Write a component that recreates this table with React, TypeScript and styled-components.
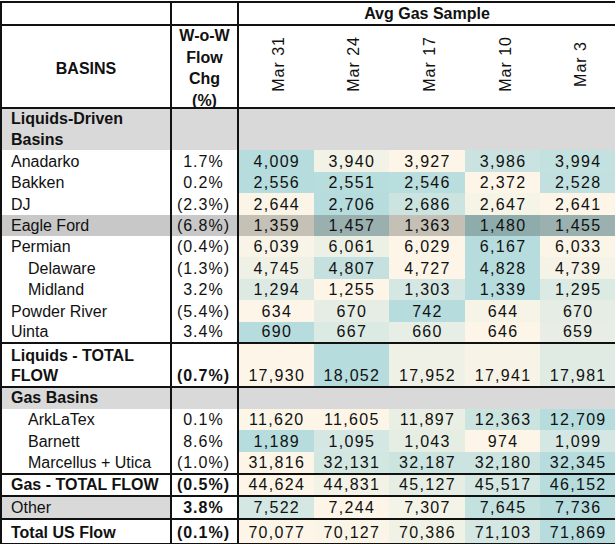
import React from 'react';
import styled, { createGlobalStyle } from 'styled-components';

const Global = createGlobalStyle`
  html, body { margin: 0; padding: 0; background: #ffffff; }
  body { font-family: "Liberation Sans", Arial, sans-serif; color: #111111; }
`;

const LINE = '2px solid #111111';
const CREAM = [253, 246, 232];
const TEAL = [182, 220, 221];

const Table = styled.table`
  border-collapse: collapse;
  table-layout: fixed;
  width: 615px;
  margin-top: 1px;
  font-size: 16px;
  border: ${LINE};
`;

const Col = styled.col<{ $w: number }>`
  width: ${(p) => p.$w}px;
`;

const Row = styled.tr<{ $h: number; $line?: boolean }>`
  height: ${(p) => p.$h}px;
  ${(p) => (p.$line ? `border-bottom: ${LINE};` : '')}
`;

const Cell = styled.td<{
  $bg?: string;
  $bold?: boolean;
  $indent?: boolean;
  $edge?: boolean;
}>`
  padding: 0 0 0 ${(p) => (p.$indent ? 26 : 9)}px;
  line-height: 20px;
  text-align: left;
  vertical-align: bottom;
  background: ${(p) => p.$bg || '#ffffff'};
  font-weight: ${(p) => (p.$bold ? 700 : 400)};
  white-space: nowrap;
  ${(p) => (p.$edge ? `border-right: ${LINE};` : '')}
`;

const LabelCell = styled(Cell)`
  white-space: normal;
`;

const SectionLabel = styled(LabelCell)`
  padding-bottom: 0;
  line-height: 20.5px;
`;

const PctCell = styled(Cell)`
  padding: 0 7px 0 0;
  text-align: right;
  letter-spacing: 1px;
`;

const NumCell = styled.td<{ $bg: string }>`
  padding: 0 0 0 1px;
  text-align: center;
  line-height: 20px;
  vertical-align: bottom;
  background: ${(p) => p.$bg};
  letter-spacing: 1.3px;
`;

const HeadCell = styled.th<{ $edge?: boolean; $drop?: number }>`
  padding: ${(p) => p.$drop || 0}px 0 0 0;
  font-weight: 700;
  text-align: center;
  vertical-align: middle;
  line-height: 20px;
  ${(p) => (p.$edge ? `border-right: ${LINE};` : '')}
`;

const HeadStack = styled.div`
  line-height: 21.6px;
  margin: -1px 0 -4px;
`;

const DateCell = styled.th`
  padding: 0;
  font-weight: 400;
  text-align: center;
  vertical-align: middle;
  line-height: 20px;
`;

const Rotated = styled.span`
  display: inline-block;
  writing-mode: vertical-rl;
  transform: rotate(180deg);
  line-height: 20px;
  letter-spacing: 1px;
  margin-left: 6px;
`;

const Ghost = styled.span`
  visibility: hidden;
`;

const GRAY = '#d9d9d9';
const HIGHLIGHT = '#c8c8c8';

type Kind = 'data' | 'section' | 'total' | 'other';

interface RowDef {
  label: string;
  wow?: string;
  vals?: number[];
  kind: Kind;
  indent?: boolean;
  highlight?: boolean;
  line?: boolean;
  h: number;
}

const rows: RowDef[] = [
  { label: 'Liquids-Driven Basins', kind: 'section', h: 42 },
  { label: 'Anadarko', wow: '1.7%', vals: [4009, 3940, 3927, 3986, 3994], kind: 'data', h: 21.4 },
  { label: 'Bakken', wow: '0.2%', vals: [2556, 2551, 2546, 2372, 2528], kind: 'data', h: 21.4 },
  { label: 'DJ', wow: '(2.3%)', vals: [2644, 2706, 2686, 2647, 2641], kind: 'data', h: 21.4 },
  { label: 'Eagle Ford', wow: '(6.8%)', vals: [1359, 1457, 1363, 1480, 1455], kind: 'data', highlight: true, h: 21.4 },
  { label: 'Permian', wow: '(0.4%)', vals: [6039, 6061, 6029, 6167, 6033], kind: 'data', h: 21.5 },
  { label: 'Delaware', wow: '(1.3%)', vals: [4745, 4807, 4727, 4828, 4739], kind: 'data', indent: true, h: 21.4 },
  { label: 'Midland', wow: '3.2%', vals: [1294, 1255, 1303, 1339, 1295], kind: 'data', indent: true, h: 21.4 },
  { label: 'Powder River', wow: '(5.4%)', vals: [634, 670, 742, 644, 670], kind: 'data', h: 21.5 },
  { label: 'Uinta', wow: '3.4%', vals: [690, 667, 660, 646, 659], kind: 'data', line: true, h: 21.6 },
  { label: 'Liquids - TOTAL FLOW', wow: '(0.7%)', vals: [17930, 18052, 17952, 17941, 17981], kind: 'total', line: true, h: 44 },
  { label: 'Gas Basins', kind: 'section', h: 21 },
  { label: 'ArkLaTex', wow: '0.1%', vals: [11620, 11605, 11897, 12363, 12709], kind: 'data', indent: true, h: 21.6 },
  { label: 'Barnett', wow: '8.6%', vals: [1189, 1095, 1043, 974, 1099], kind: 'data', indent: true, h: 21.7 },
  { label: 'Marcellus + Utica', wow: '(1.0%)', vals: [31816, 32131, 32187, 32180, 32345], kind: 'data', indent: true, line: true, h: 21.7 },
  { label: 'Gas - TOTAL FLOW', wow: '(0.5%)', vals: [44624, 44831, 45127, 45517, 46152], kind: 'total', line: true, h: 22 },
  { label: 'Other', wow: '3.8%', vals: [7522, 7244, 7307, 7645, 7736], kind: 'other', line: true, h: 23 },
  { label: 'Total US Flow', wow: '(0.1%)', vals: [70077, 70127, 70386, 71103, 71869], kind: 'total', h: 25 },
];

const dates = ['Mar 31', 'Mar 24', 'Mar 17', 'Mar 10', 'Mar 3'];

function heat(v: number, vals: number[], dim: boolean): string {
  const min = Math.min(...vals);
  const max = Math.max(...vals);
  const t = max === min ? 0 : (v - min) / (max - min);
  const f = dim ? 0.784 : 1;
  const c = CREAM.map((a, i) => Math.round((a + (TEAL[i] - a) * t) * f));
  return `rgb(${c[0]}, ${c[1]}, ${c[2]})`;
}

function Pct({ text }: { text: string }) {
  const neg = text.startsWith('(');
  return (
    <>
      {text}
      {!neg && <Ghost>)</Ghost>}
    </>
  );
}

export default function App() {
  return (
    <>
      <Global />
      <Table>
        <colgroup>
          <Col $w={170} />
          <Col $w={67} />
          <Col $w={75.6} />
          <Col $w={75.6} />
          <Col $w={75.6} />
          <Col $w={75.6} />
          <Col $w={75.6} />
        </colgroup>
        <thead>
          <Row $h={23} $line>
            <HeadCell $edge />
            <HeadCell $edge />
            <HeadCell colSpan={5}>Avg Gas Sample</HeadCell>
          </Row>
          <Row $h={83} $line>
            <HeadCell $edge $drop={5}>
              BASINS
            </HeadCell>
            <HeadCell $edge>
              <HeadStack>
                W-o-W
                <br />
                Flow
                <br />
                Chg
                <br />
                (%)
              </HeadStack>
            </HeadCell>
            {dates.map((d) => (
              <DateCell key={d}>
                <Rotated>{d}</Rotated>
              </DateCell>
            ))}
          </Row>
        </thead>
        <tbody>
          {rows.map((r) => {
            if (r.kind === 'section') {
              return (
                <Row key={r.label} $h={r.h} $line={r.line}>
                  <SectionLabel $bg={GRAY} $bold $edge>
                    {r.label}
                  </SectionLabel>
                  <Cell $bg={GRAY} $edge />
                  <Cell $bg={GRAY} colSpan={5} />
                </Row>
              );
            }
            const vals = r.vals || [];
            const bold = r.kind === 'total';
            const labelBg = r.highlight ? HIGHLIGHT : r.kind === 'other' ? GRAY : '#ffffff';
            const pctBg = r.highlight ? HIGHLIGHT : '#ffffff';
            return (
              <Row key={r.label} $h={r.h} $line={r.line}>
                <LabelCell $bg={labelBg} $bold={bold} $indent={r.indent} $edge>
                  {r.label === 'Liquids - TOTAL FLOW' ? (
                    <>
                      Liquids - TOTAL
                      <br />
                      FLOW
                    </>
                  ) : (
                    r.label
                  )}
                </LabelCell>
                <PctCell $bg={pctBg} $bold={bold || r.kind === 'other'} $edge>
                  <Pct text={r.wow || ''} />
                </PctCell>
                {vals.map((v, i) => (
                  <NumCell key={i} $bg={heat(v, vals, !!r.highlight)}>
                    {v.toLocaleString('en-US')}
                  </NumCell>
                ))}
              </Row>
            );
          })}
        </tbody>
      </Table>
    </>
  );
}
